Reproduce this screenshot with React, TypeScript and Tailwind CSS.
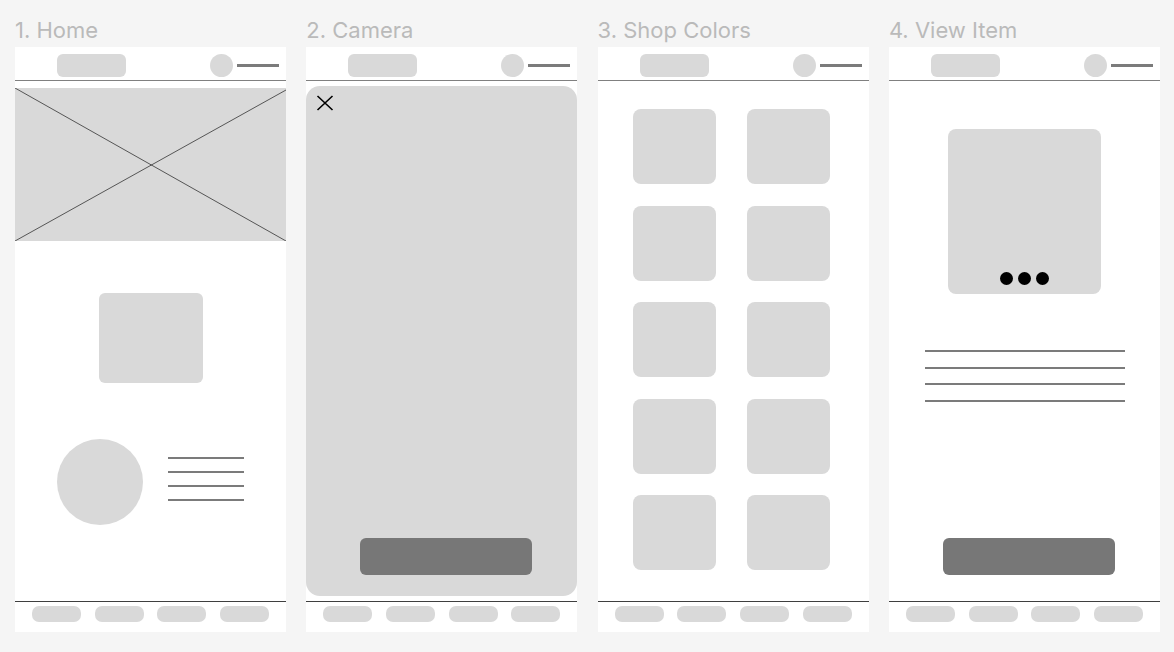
import React from 'react';

const Header = () => (
  <div className="flex h-[34px] shrink-0 items-start justify-between border-b border-[#808080] pl-[42px] pr-[7px] pt-[7px]">
    <div className="h-[23px] w-[69px] rounded-[6px] bg-[#d9d9d9]" />
    <div className="flex items-center gap-[4px]">
      <div className="h-[23px] w-[23px] rounded-full bg-[#d9d9d9]" />
      <div className="h-[3px] w-[42px] bg-[#7b7b7b]" />
    </div>
  </div>
);

const Footer = () => (
  <div className="flex h-[31px] shrink-0 items-start justify-between border-t border-[#3f3f3f] px-[17px] pt-[4px]">
    {[0, 1, 2, 3].map((i) => (
      <div key={i} className="h-[16px] w-[49px] rounded-[7px] bg-[#d9d9d9]" />
    ))}
  </div>
);

const Lines = ({ width, gap }: { width: string; gap: string }) => (
  <div className={`flex flex-col ${gap}`}>
    {[0, 1, 2, 3].map((i) => (
      <div key={i} className={`h-[2px] ${width} bg-[#7b7b7b]`} />
    ))}
  </div>
);

const Frame = ({ title, children }: { title: string; children: React.ReactNode }) => (
  <div className="flex w-[271px] shrink-0 flex-col">
    <div className="mb-[5px] h-6 whitespace-nowrap text-[22px] leading-6 text-[#bababa]">{title}</div>
    <div className="flex h-[585px] flex-col bg-white">
      <Header />
      <div className="flex min-h-0 flex-1 flex-col">{children}</div>
      <Footer />
    </div>
  </div>
);

const Home = () => (
  <>
    {/* hero placeholder */}
    <div className="relative mt-[7px] h-[153px] w-full bg-[#d9d9d9]">
      <svg className="absolute inset-0 h-full w-full" viewBox="0 0 271 153" preserveAspectRatio="none">
        <line x1="0" y1="0" x2="271" y2="153" stroke="#333" strokeWidth="0.8" />
        <line x1="0" y1="153" x2="271" y2="2" stroke="#333" strokeWidth="0.8" />
      </svg>
    </div>
    <div className="mt-[52px] flex justify-center">
      <div className="h-[90px] w-[104px] rounded-[6px] bg-[#d9d9d9]" />
    </div>
    <div className="mt-[56px] flex items-start pl-[42px]">
      <div className="h-[86px] w-[86px] rounded-full bg-[#d9d9d9]" />
      <div className="ml-[25px] mt-[18px]">
        <Lines width="w-[76px]" gap="gap-[12px]" />
      </div>
    </div>
  </>
);

const Camera = () => (
  <div className="my-[5px] flex flex-1 flex-col rounded-[14px] bg-[#d9d9d9]">
    <svg className="ml-[10px] mt-[9px]" width="18" height="16" viewBox="0 0 18 16">
      <path d="M1.5 1 L16.5 15 M16.5 1 L1.5 15" stroke="#000" strokeWidth="1.6" fill="none" />
    </svg>
    <div className="flex-1" />
    <div className="mb-[21px] ml-[54px] h-[37px] w-[172px] rounded-[6px] bg-[#777777]" />
  </div>
);

const ShopColors = () => (
  <div className="mt-[28px] grid grid-cols-[83px_83px] gap-x-[31px] gap-y-[21.5px] pl-[35px]">
    {Array.from({ length: 10 }).map((_, i) => (
      <div key={i} className="h-[75px] w-[83px] rounded-[8px] bg-[#d9d9d9]" />
    ))}
  </div>
);

const ViewItem = () => (
  <>
    <div className="mt-[48px] flex justify-center">
      <div className="flex h-[165px] w-[153px] items-end justify-center gap-[5px] rounded-[8px] bg-[#d9d9d9] pb-[9px]">
        <div className="h-[13px] w-[13px] rounded-full bg-black" />
        <div className="h-[13px] w-[13px] rounded-full bg-black" />
        <div className="h-[13px] w-[13px] rounded-full bg-black" />
      </div>
    </div>
    <div className="mt-[56px] pl-[36px]">
      <Lines width="w-[200px]" gap="gap-[14.7px]" />
    </div>
    <div className="flex-1" />
    <div className="mb-[26px] ml-[54px] h-[37px] w-[172px] rounded-[6px] bg-[#777777]" />
  </>
);

export default function App() {
  return (
    <div
      className="flex h-screen w-full gap-[20.3px] bg-[#f5f5f5] pl-[15px] pt-[18px]"
      style={{ fontFamily: 'Inter, "Noto Sans", sans-serif' }}
    >
      <Frame title="1. Home">
        <Home />
      </Frame>
      <Frame title="2. Camera">
        <Camera />
      </Frame>
      <Frame title="3. Shop Colors">
        <ShopColors />
      </Frame>
      <Frame title="4. View Item">
        <ViewItem />
      </Frame>
    </div>
  );
}
